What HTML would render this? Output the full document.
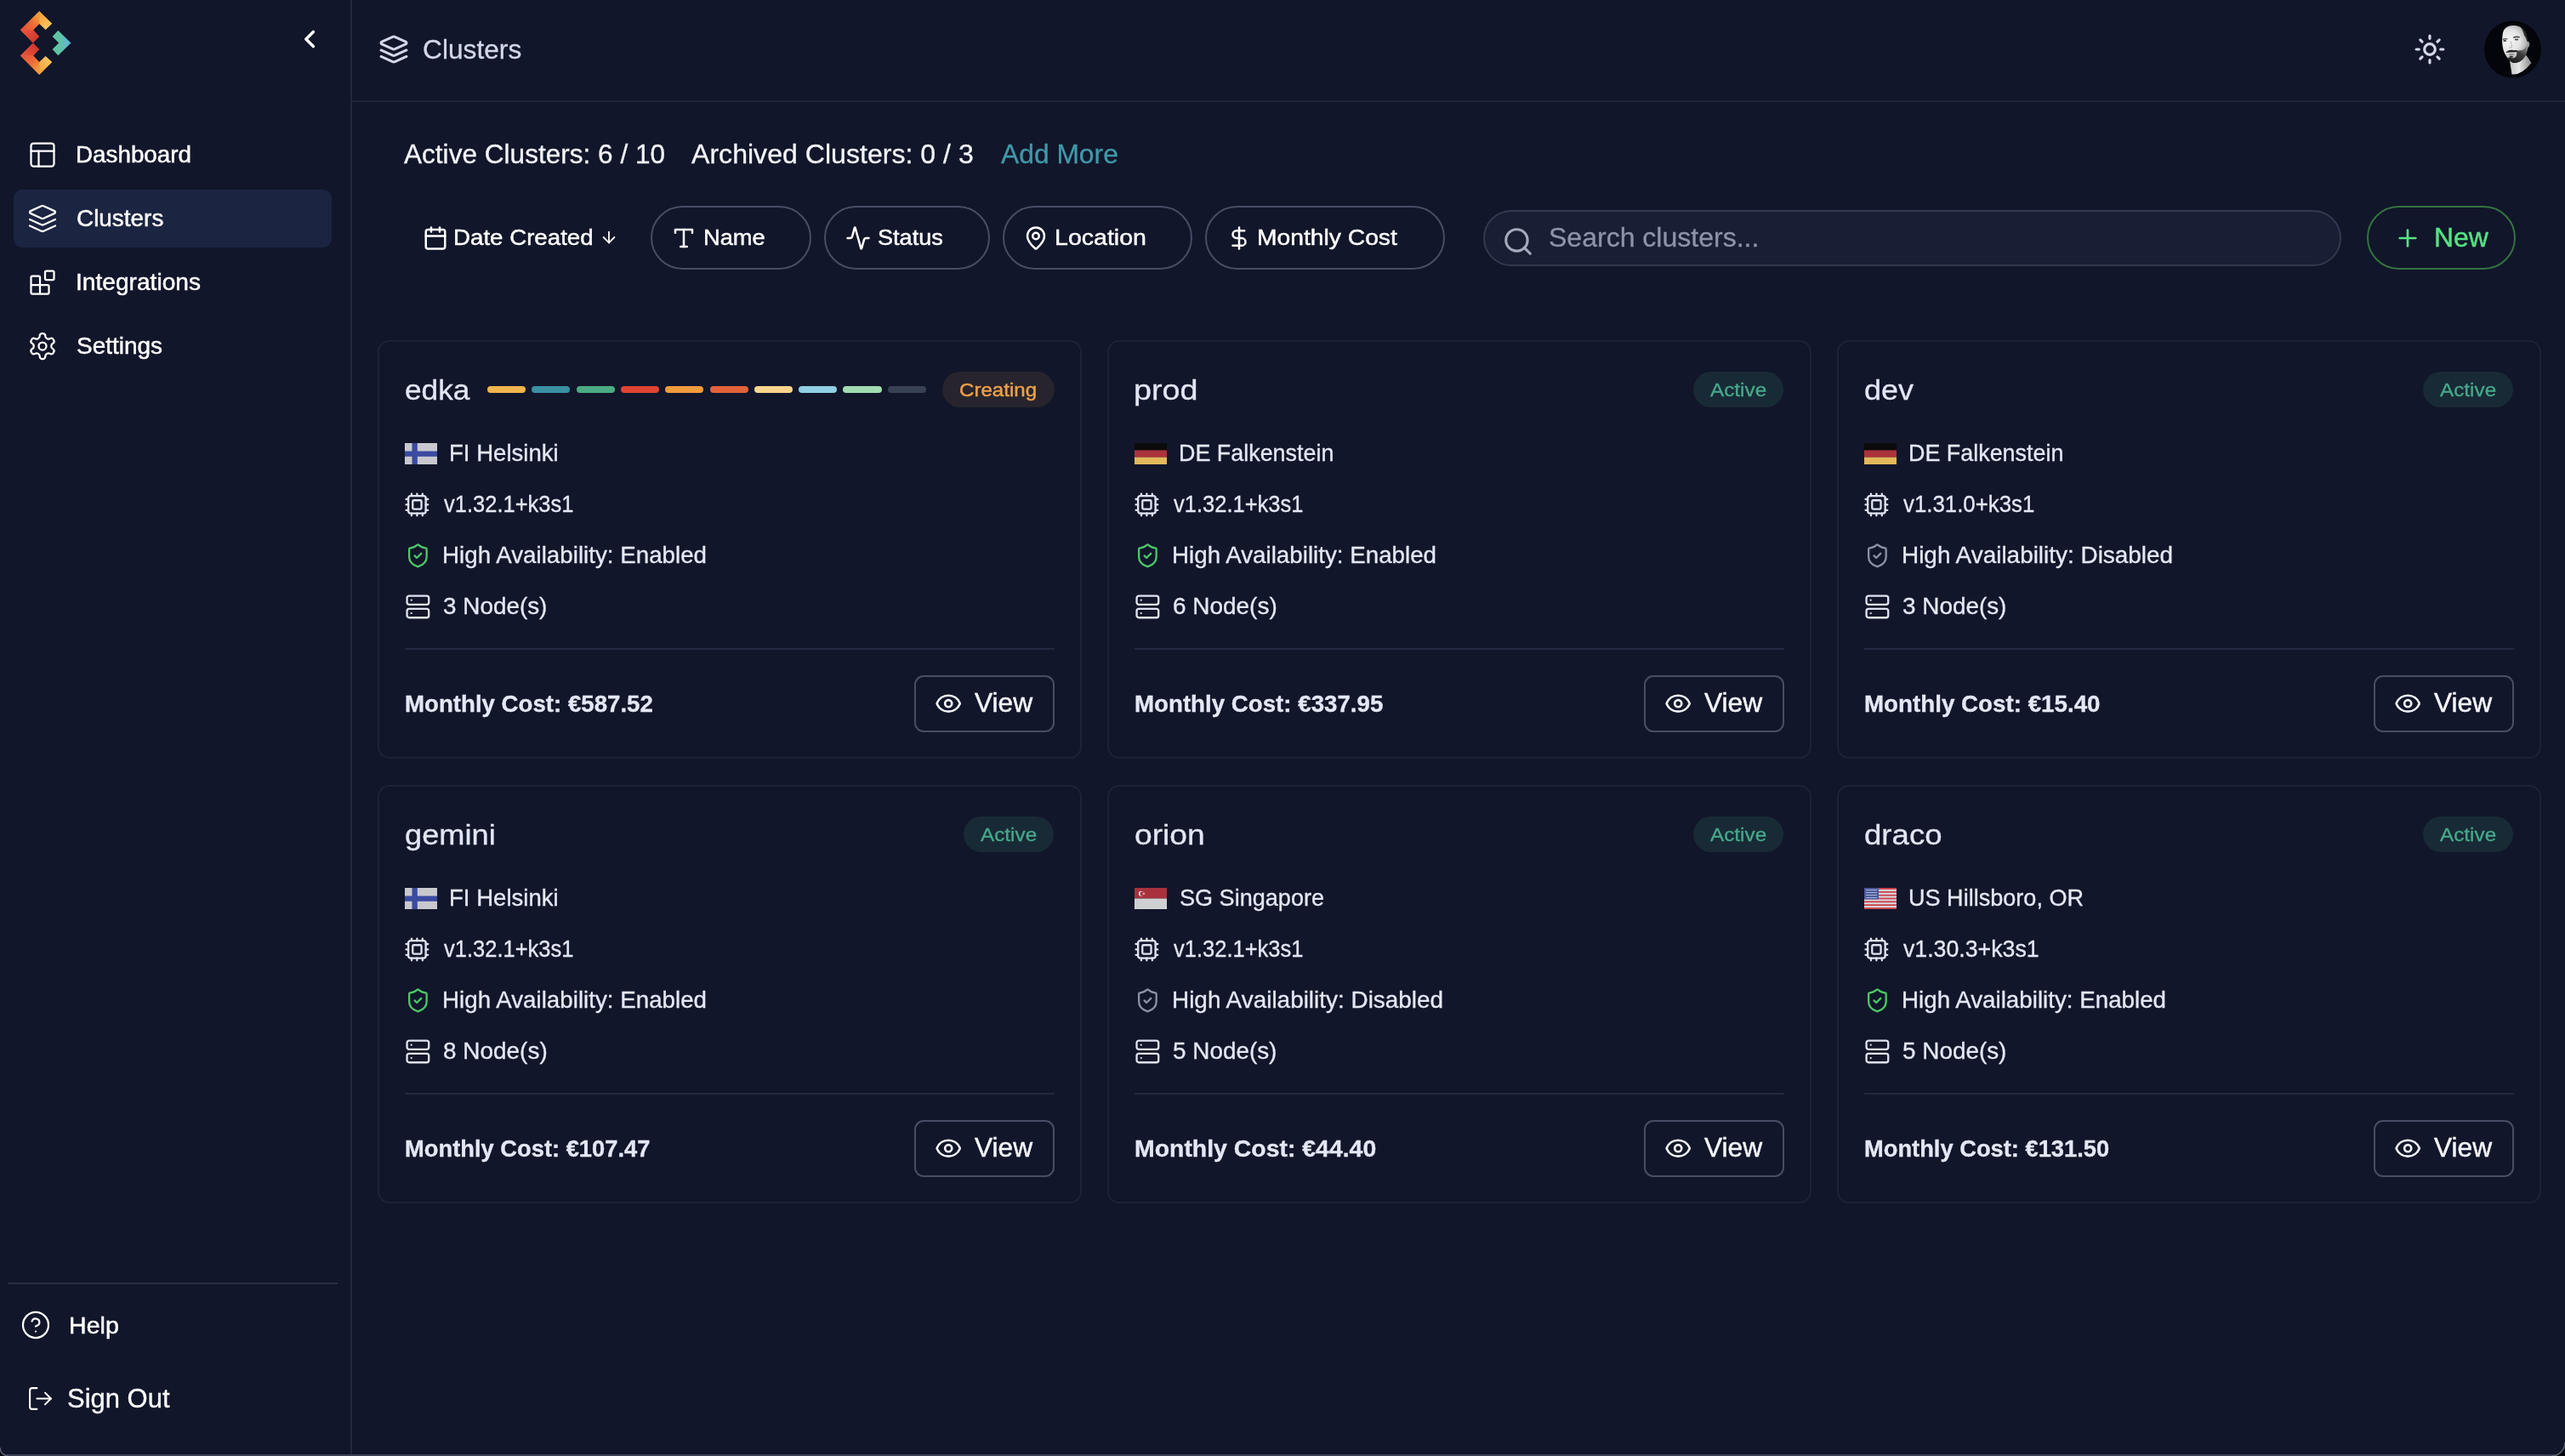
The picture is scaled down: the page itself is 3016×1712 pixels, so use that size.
<!DOCTYPE html>
<html lang="en">
<head>
<meta charset="utf-8">
<title>Clusters</title>
<style>
*{box-sizing:border-box;margin:0;padding:0}
html,body{width:3016px;height:1712px;overflow:hidden;background:#11162a}
body{position:relative;font-family:"Liberation Sans",sans-serif;color:#f3f5fb}
svg{display:block;overflow:visible}
.ic{fill:none;stroke:currentColor;stroke-linecap:round;stroke-linejoin:round}
.abs{position:absolute}
.t{position:absolute;white-space:nowrap;line-height:1;transform-origin:0 50%;-webkit-text-stroke:.3px currentColor}
.m{-webkit-text-stroke:.45px currentColor}
.b{font-weight:bold;-webkit-text-stroke:.3px currentColor}
#root{position:absolute;left:0;top:0;width:3016px;height:1712px;will-change:transform}
#side{position:absolute;left:0;top:0;width:414px;height:1712px;border-right:2px solid #22283d}
#navon{position:absolute;left:16px;top:223px;width:374px;height:68px;border-radius:10px;background:#1b2441}
#sdiv{position:absolute;left:9px;top:1508px;width:388px;height:2px;background:#272d43}
#head{position:absolute;left:414px;top:0;width:2602px;height:120px;border-bottom:2px solid #1f2539}
.pill{position:absolute;top:242px;height:75px;border:2px solid #474d65;border-radius:38px}
#search{position:absolute;left:1744px;top:247px;width:1009px;height:66px;border:2px solid #323950;border-radius:33px;background:#181e33}
#new{position:absolute;left:2783px;top:242px;width:175px;height:75px;border:2px solid #34733f;border-radius:38px}
.card{position:absolute;width:828px;height:492px;border:2px solid #1c2237;border-radius:14px}
.card>*{position:absolute}
.badge{height:42px;border-radius:21px}
.badge.a{background:#182a36;color:#47a98b}
.badge.c{background:#27242d;color:#f0a04a}
.cdiv{left:30px;width:764px;top:360px;height:2px;background:#222940}
.view{left:629px;top:392px;width:165px;height:67px;border:2px solid #474e65;border-radius:11px}
</style>
</head>
<body>
<div id="root">
<div id="side">
<svg class="abs" style="left:0;top:0" width="110" height="110" viewBox="0 0 110 110">
<defs>
<linearGradient id="ga" gradientUnits="userSpaceOnUse" x1="46" y1="20" x2="58" y2="32"><stop offset="0" stop-color="#f4a53e"/><stop offset=".5" stop-color="#f7b650"/><stop offset="1" stop-color="#fac964"/></linearGradient>
<linearGradient id="gb" gradientUnits="userSpaceOnUse" x1="30" y1="36" x2="46" y2="20"><stop offset="0" stop-color="#e7543a"/><stop offset=".5" stop-color="#ec6c37"/><stop offset="1" stop-color="#f29a3a"/></linearGradient>
<linearGradient id="gc" gradientUnits="userSpaceOnUse" x1="30" y1="35" x2="43" y2="47"><stop offset="0" stop-color="#e6523a"/><stop offset=".5" stop-color="#dc4536"/><stop offset="1" stop-color="#cd3830"/></linearGradient>
<linearGradient id="gd" gradientUnits="userSpaceOnUse" x1="63" y1="50" x2="84" y2="50"><stop offset="0" stop-color="#5cc4a0"/><stop offset=".4" stop-color="#5fc3a8"/><stop offset=".7" stop-color="#62b9c9"/><stop offset="1" stop-color="#5eabd8"/></linearGradient>
</defs>
<g>
<path fill="#ea6a37" d="M46.2 13.400 60.800 27.800 53.600 34.600 46.200 27.600 38.800 35.300 45.800 43 38.800 50 24.200 35.300Z"/>
<path fill="url(#gc)" d="M23.8 35.3H39.2L46.2 43 38.8 50.5Z"/>
<path fill="url(#gb)" d="M46.2 13V28L39.2 35.3H23.8Z"/>
<path fill="url(#ga)" d="M46.2 13 61.2 27.8 53.6 35 46.2 28Z"/>
</g>
<g transform="matrix(1 0 0 -1 0 100.900)">
<path fill="#ea6a37" d="M46.2 13.400 60.800 27.800 53.600 34.600 46.200 27.600 38.800 35.300 45.800 43 38.800 50 24.200 35.300Z"/>
<path fill="url(#gc)" d="M23.8 35.3H39.2L46.2 43 38.8 50.5Z"/>
<path fill="url(#gb)" d="M46.2 13V28L39.2 35.3H23.8Z"/>
<path fill="url(#ga)" d="M46.2 13 61.2 27.8 53.6 35 46.2 28Z"/>
</g>
<path fill="url(#gd)" d="M68.3 35.7 83.5 50.4 68.3 65.2 61.6 58 69.2 50.4 61.6 42.9Z"/>
</svg>
<svg class="abs ic" style="left:340px;top:26px;stroke-width:3.5;color:#fff" width="40" height="40" viewBox="340 26 40 40"><polyline points="368.4,37.4 359.8,46 368.4,54.6"/></svg>
<div id="navon"></div>
<svg class="abs ic" style="left:32.0px;top:164.0px;stroke-width:1.5;color:#fff;" width="36" height="36" viewBox="0 0 24 24"><rect width="18" height="18" x="3" y="3" rx="2"/><path d="M3 9h18"/><path d="M9 21V9"/></svg>
<div class="t m" style="left:89.4px;top:167.8px;font-size:27.2px;transform:scaleX(1.0225);color:#fff;">Dashboard</div>
<svg class="abs ic" style="left:32.0px;top:239.0px;stroke-width:1.5;color:#fff;" width="36" height="36" viewBox="0 0 24 24"><path d="m12.83 2.18a2 2 0 0 0-1.66 0L2.6 6.08a1 1 0 0 0 0 1.83l8.58 3.91a2 2 0 0 0 1.66 0l8.58-3.9a1 1 0 0 0 0-1.83Z"/><path d="m22 17.65-9.17 4.16a2 2 0 0 1-1.66 0L2 17.65"/><path d="m22 12.65-9.17 4.16a2 2 0 0 1-1.66 0L2 12.65"/></svg>
<div class="t m" style="left:89.7px;top:242.9px;font-size:27.2px;transform:scaleX(1.0263);color:#fff;">Clusters</div>
<svg class="abs ic" style="left:32.0px;top:314.0px;stroke-width:1.5;color:#fff;" width="36" height="36" viewBox="0 0 24 24"><rect width="7" height="7" x="14" y="3" rx="1"/><path d="M10 21V8a1 1 0 0 0-1-1H4a1 1 0 0 0-1 1v12a1 1 0 0 0 1 1h12a1 1 0 0 0 1-1v-5a1 1 0 0 0-1-1H3"/></svg>
<div class="t m" style="left:89.3px;top:317.9px;font-size:27.2px;transform:scaleX(1.0346);color:#fff;">Integrations</div>
<svg class="abs ic" style="left:32.0px;top:389.0px;stroke-width:1.5;color:#fff;" width="36" height="36" viewBox="0 0 24 24"><path d="M12.22 2h-.44a2 2 0 0 0-2 2v.18a2 2 0 0 1-1 1.73l-.43.25a2 2 0 0 1-2 0l-.15-.08a2 2 0 0 0-2.73.73l-.22.38a2 2 0 0 0 .73 2.73l.15.1a2 2 0 0 1 1 1.72v.51a2 2 0 0 1-1 1.74l-.15.09a2 2 0 0 0-.73 2.73l.22.38a2 2 0 0 0 2.73.73l.15-.08a2 2 0 0 1 2 0l.43.25a2 2 0 0 1 1 1.73V20a2 2 0 0 0 2 2h.44a2 2 0 0 0 2-2v-.18a2 2 0 0 1 1-1.73l.43-.25a2 2 0 0 1 2 0l.15.08a2 2 0 0 0 2.73-.73l.22-.39a2 2 0 0 0-.73-2.73l-.15-.08a2 2 0 0 1-1-1.74v-.5a2 2 0 0 1 1-1.74l.15-.09a2 2 0 0 0 .73-2.73l-.22-.38a2 2 0 0 0-2.73-.73l-.15.08a2 2 0 0 1-2 0l-.43-.25a2 2 0 0 1-1-1.73V4a2 2 0 0 0-2-2z"/><circle cx="12" cy="12" r="3"/></svg>
<div class="t m" style="left:90.0px;top:393.0px;font-size:27.2px;transform:scaleX(1.0275);color:#fff;">Settings</div>
<div id="sdiv"></div>
<svg class="abs ic" style="left:23.9px;top:1540.0px;stroke-width:1.5;color:#fff;" width="36" height="36" viewBox="0 0 24 24"><circle cx="12" cy="12" r="10"/><path d="M9.09 9a3 3 0 0 1 5.83 1c0 2-3 3-3 3"/><path d="M12 17h.01"/></svg>
<div class="t m" style="left:81.4px;top:1544.8px;font-size:27.2px;transform:scaleX(1.0512);color:#fff;">Help</div>
<svg class="abs ic" style="left:31.3px;top:1628.4px;stroke-width:1.5;color:#fff;" width="33" height="33" viewBox="0 0 24 24"><path d="M9 21H5a2 2 0 0 1-2-2V5a2 2 0 0 1 2-2h4"/><polyline points="16 17 21 12 16 7"/><line x1="21" x2="9" y1="12" y2="12"/></svg>
<div class="t" style="left:78.9px;top:1628.8px;font-size:31.7px;transform:scaleX(0.9772);color:#fff;">Sign Out</div>
</div>
<div id="head"></div>
<svg class="abs ic" style="left:444.9px;top:39.9px;stroke-width:2;color:#d3d7e9;" width="36" height="36" viewBox="0 0 24 24"><path d="m12.83 2.18a2 2 0 0 0-1.66 0L2.6 6.08a1 1 0 0 0 0 1.83l8.58 3.91a2 2 0 0 0 1.66 0l8.58-3.9a1 1 0 0 0 0-1.83Z"/><path d="m22 17.65-9.17 4.16a2 2 0 0 1-1.66 0L2 17.65"/><path d="m22 12.65-9.17 4.16a2 2 0 0 1-1.66 0L2 12.65"/></svg>
<div class="t" style="left:496.8px;top:42.5px;font-size:31.7px;transform:scaleX(1.0003);color:#d3d7e9;">Clusters</div>
<svg class="abs ic" style="left:2837.7px;top:38.7px;stroke-width:2;color:#d3d7e9;" width="38" height="38" viewBox="0 0 24 24"><circle cx="12" cy="12" r="4"/><path d="M12 2v2"/><path d="M12 20v2"/><path d="m4.93 4.93 1.41 1.41"/><path d="m17.66 17.66 1.41 1.41"/><path d="M2 12h2"/><path d="M20 12h2"/><path d="m6.34 17.66-1.41 1.41"/><path d="m19.07 4.93-1.41 1.41"/></svg>
<svg class="abs" style="left:2920px;top:24px" width="68" height="68" viewBox="0 0 68 68">
<defs><clipPath id="av"><circle cx="34.500" cy="34" r="33.500"/></clipPath>
<radialGradient id="fg" gradientUnits="userSpaceOnUse" cx="30" cy="24" r="26"><stop offset="0" stop-color="#f6f6f6"/><stop offset=".5" stop-color="#e4e4e4"/><stop offset=".8" stop-color="#b4b4b4"/><stop offset="1" stop-color="#7c7c7c"/></radialGradient>
<linearGradient id="ng" gradientUnits="userSpaceOnUse" x1="32" y1="52" x2="56" y2="50"><stop offset="0" stop-color="#c9c9c9"/><stop offset=".4" stop-color="#e6e6e6"/><stop offset="1" stop-color="#8d8d8d"/></linearGradient>
<linearGradient id="bg2" gradientUnits="userSpaceOnUse" x1="36" y1="50" x2="48" y2="30"><stop offset="0" stop-color="#1d1d1d"/><stop offset=".55" stop-color="#3a3a3a"/><stop offset="1" stop-color="#8a8a8a"/></linearGradient>
<filter id="bl" x="-20%" y="-20%" width="140%" height="140%"><feGaussianBlur stdDeviation=".55"/></filter>
</defs>
<g clip-path="url(#av)"><rect width="68" height="68" fill="#04050a"/>
<g filter="url(#bl)">
<path d="M31 47 L33.500 63.500 Q45 64.500 56.500 50 L50.500 41Z" fill="url(#ng)"/>
<path d="M35.900 6C28 5.500 23 10 22.600 17C22 22 22 26 22.600 30C23.200 35 25 40 28.700 44.400C31 47.500 33 49.500 36 50C40 50 45 47.500 48 44C50.500 40 51.500 36 52.500 32C54.500 31 55 27 53.500 25.500C53 24 52 24.500 51.500 25C51.500 20 51 16 49 13C46 8 41 6 35.900 6Z" fill="url(#fg)"/>
<path d="M43 7C49 9.500 52 15 51.700 25.500C50.500 22 49.500 19.500 48 17.500C47 13 45.500 10 43 7Z" fill="#161616" opacity=".85"/>
<path d="M39 35.500C43 35.500 46 35.500 48 33.500C49.500 32 50.500 30.500 51.300 29C52 35 50.500 41 47.500 44.500C44 48.700 40 50.300 36 50C33 49.500 30.500 47 28.700 44.400C29.500 43.500 30.500 43.200 31.500 43.500C33.500 45 36.500 44.500 38.500 42.500C39.500 40.500 39.500 38 39 35.500Z" fill="url(#bg2)"/>
<path d="M26.300 38C28.500 35 32.500 34.300 35.500 35.300C37.500 34.800 39.500 35 40.800 36.200C38.500 37.300 36 37.300 34 37.600C31 37.600 28.500 38 26.300 38Z" fill="#242424"/>
<ellipse cx="33" cy="40" rx="3.300" ry="1.100" fill="#8e8e8e"/>
<ellipse cx="32.800" cy="42.800" rx="2.200" ry="1.100" fill="#2c2c2c"/>
<path d="M22.800 21.800Q25.500 20.200 28.600 21.600L28.400 22.600Q25.500 21.600 22.900 23Z" fill="#3c3c3c"/>
<path d="M35 19.600Q39 17.600 43 19.300L42.700 20.500Q39 19.200 35.300 20.900Z" fill="#3c3c3c"/>
<ellipse cx="25.200" cy="24" rx="1.900" ry=".9" fill="#3a3a3a"/>
<ellipse cx="39" cy="22.400" rx="2.300" ry="1" fill="#484848"/>
<path d="M31.800 24Q33.600 28 33.600 31.500Q32 32.600 30 31.800" fill="none" stroke="#b5b5b5" stroke-width="1"/>
</g>
</g></svg>
<div class="t" style="left:474.6px;top:166.2px;font-size:31.7px;transform:scaleX(0.9965);color:#f3f5fb;">Active Clusters: 6 / 10</div>
<div class="t" style="left:813.3px;top:166.2px;font-size:31.7px;transform:scaleX(1.0127);color:#f3f5fb;">Archived Clusters: 0 / 3</div>
<div class="t" style="left:1177.0px;top:166.2px;font-size:31.7px;transform:scaleX(1.0032);color:#4298a9;">Add More</div>
<svg class="abs ic" style="left:497.1px;top:264.9px;stroke-width:2;color:#fff;" width="30" height="30" viewBox="0 0 24 24"><path d="M8 2v4"/><path d="M16 2v4"/><rect width="18" height="18" x="3" y="4" rx="2"/><path d="M3 10h18"/></svg>
<div class="t m" style="left:533.4px;top:266.4px;font-size:26.1px;transform:scaleX(1.0607);color:#fff;">Date Created</div>
<svg class="abs ic" style="left:705.2px;top:268.4px;stroke-width:2;color:#fff;" width="22" height="22" viewBox="0 0 24 24"><path d="M12 5v14"/><path d="m19 12-7 7-7-7"/></svg>
<div class="pill" style="left:765px;width:189px"></div>
<svg class="abs ic" style="left:789.1px;top:265.2px;stroke-width:2;color:#fff;" width="30" height="30" viewBox="0 0 24 24"><polyline points="4 7 4 4 20 4 20 7"/><line x1="9" x2="15" y1="20" y2="20"/><line x1="12" x2="12" y1="4" y2="20"/></svg>
<div class="t m" style="left:826.6px;top:266.4px;font-size:26.1px;transform:scaleX(1.0448);color:#fff;">Name</div>
<div class="pill" style="left:969px;width:195px"></div>
<svg class="abs ic" style="left:994.0px;top:264.9px;stroke-width:2;color:#fff;" width="30" height="30" viewBox="0 0 24 24"><path d="M22 12h-2.480a2 2 0 0 0-1.930 1.460l-2.350 8.360a.25.25 0 0 1-.48 0L9.240 2.180a.25.25 0 0 0-.48 0l-2.350 8.360A2 2 0 0 1 4.490 12H2"/></svg>
<div class="t m" style="left:1031.5px;top:266.4px;font-size:26.1px;transform:scaleX(1.038);color:#fff;">Status</div>
<div class="pill" style="left:1179px;width:223px"></div>
<svg class="abs ic" style="left:1202.9px;top:265.0px;stroke-width:2;color:#fff;" width="30" height="30" viewBox="0 0 24 24"><path d="M20 10c0 4.993-5.539 10.193-7.399 11.799a1 1 0 0 1-1.202 0C9.539 20.193 4 14.993 4 10a8 8 0 0 1 16 0"/><circle cx="12" cy="10" r="3"/></svg>
<div class="t m" style="left:1240.1px;top:266.4px;font-size:26.1px;transform:scaleX(1.0942);color:#fff;">Location</div>
<div class="pill" style="left:1417px;width:282px"></div>
<svg class="abs ic" style="left:1442.0px;top:264.7px;stroke-width:2;color:#fff;" width="30" height="30" viewBox="0 0 24 24"><line x1="12" x2="12" y1="2" y2="22"/><path d="M17 5H9.500a3.500 3.500 0 0 0 0 7h5a3.500 3.500 0 0 1 0 7H6"/></svg>
<div class="t m" style="left:1478.4px;top:266.4px;font-size:26.1px;transform:scaleX(1.0826);color:#fff;">Monthly Cost</div>
<div id="search"></div>
<svg class="abs ic" style="left:1765.6px;top:265.0px;stroke-width:2;color:#a4a9be;" width="38" height="38" viewBox="0 0 24 24"><circle cx="11" cy="11" r="8"/><path d="m21 21-4.300-4.300"/></svg>
<div class="t" style="left:1820.9px;top:264.3px;font-size:31.7px;transform:scaleX(1.0104);color:#8d93aa;">Search clusters...</div>
<div id="new"></div>
<svg class="abs ic" style="left:2814.9px;top:264.0px;stroke-width:2;color:#56e283;" width="32" height="32" viewBox="0 0 24 24"><path d="M5 12h14"/><path d="M12 5v14"/></svg>
<div class="t m" style="left:2861.6px;top:264.3px;font-size:31.7px;transform:scaleX(1.0064);color:#56e283;">New</div>
<div class="card" style="left:444px;top:400px">
<div class="t" style="left:29.8px;top:39.3px;font-size:34.0px;transform:scaleX(1.0368);color:#e2e6f5;">edka</div>
<i style="left:127.0px;top:52px;width:45.2px;height:8.4px;border-radius:4.2px;background:#f0b54e"></i><i style="left:179.3px;top:52px;width:45.2px;height:8.4px;border-radius:4.2px;background:#3a8fa3"></i><i style="left:231.6px;top:52px;width:45.2px;height:8.4px;border-radius:4.2px;background:#4bab82"></i><i style="left:283.9px;top:52px;width:45.2px;height:8.4px;border-radius:4.2px;background:#e14434"></i><i style="left:336.2px;top:52px;width:45.2px;height:8.4px;border-radius:4.2px;background:#f09b3b"></i><i style="left:388.5px;top:52px;width:45.2px;height:8.4px;border-radius:4.2px;background:#e2623b"></i><i style="left:440.8px;top:52px;width:45.2px;height:8.4px;border-radius:4.2px;background:#fbd48e"></i><i style="left:493.1px;top:52px;width:45.2px;height:8.4px;border-radius:4.2px;background:#8fd0e2"></i><i style="left:545.4px;top:52px;width:45.2px;height:8.4px;border-radius:4.2px;background:#a2dcb1"></i><i style="left:597.7px;top:52px;width:45.2px;height:8.4px;border-radius:4.2px;background:#394156"></i>
<div class="badge c" style="left:662.2px;top:35px;width:132.2px"></div><div class="t m" style="left:682.1px;top:45.4px;font-size:22.7px;transform:scaleX(1.0614);color:#f0a04a;">Creating</div>
<svg style="left:30px;top:118.500px" width="38" height="25" viewBox="0 0 38 25"><rect width="38" height="25" fill="#c8c9ce"/><rect x="8.500" width="6.300" height="25" fill="#3a4a9f"/><rect y="9.500" width="38" height="6.300" fill="#3a4a9f"/></svg><div class="t" style="left:81.7px;top:116.8px;font-size:27.2px;transform:scaleX(1.0141);color:#e4e8f6;">FI Helsinki</div>
<svg class="ic" style="left:29.4px;top:175.7px;stroke-width:1.8;color:#dfe3f2" width="30.8" height="30.8" viewBox="0 0 24 24"><path d="M12 20v2"/><path d="M12 2v2"/><path d="M17 20v2"/><path d="M17 2v2"/><path d="M2 12h2"/><path d="M2 17h2"/><path d="M2 7h2"/><path d="M20 12h2"/><path d="M20 17h2"/><path d="M20 7h2"/><path d="M7 20v2"/><path d="M7 2v2"/><rect x="4" y="4" width="16" height="16" rx="2"/><rect x="8" y="8" width="8" height="8" rx="1"/></svg><div class="t" style="left:75.9px;top:176.9px;font-size:27.2px;transform:scaleX(0.9382);color:#e4e8f6;">v1.32.1+k3s1</div>
<svg class="ic" style="left:29.6px;top:235.6px;stroke-width:1.8;color:#4cc766" width="30.8" height="30.8" viewBox="0 0 24 24"><path d="M20 13c0 5-3.500 7.500-7.660 8.950a1 1 0 0 1-.67-.010C7.500 20.500 4 18 4 13V6a1 1 0 0 1 1-1c2 0 4.500-1.200 6.240-2.720a1.170 1.170 0 0 1 1.520 0C14.510 3.810 17 5 19 5a1 1 0 0 1 1 1z"/><path d="m9 12 2 2 4-4"/></svg><div class="t" style="left:74.4px;top:237.2px;font-size:27.2px;transform:scaleX(1.0205);color:#e4e8f6;">High Availability: Enabled</div>
<svg class="ic" style="left:29.6px;top:295.7px;stroke-width:1.8;color:#dfe3f2" width="30.8" height="30.8" viewBox="0 0 24 24"><rect width="20" height="8" x="2" y="2" rx="2" ry="2"/><rect width="20" height="8" x="2" y="14" rx="2" ry="2"/><line x1="6" x2="6.010" y1="6" y2="6"/><line x1="6" x2="6.010" y1="18" y2="18"/></svg><div class="t" style="left:75.4px;top:296.7px;font-size:27.2px;transform:scaleX(1.0254);color:#e4e8f6;">3 Node(s)</div>
<div class="cdiv"></div>
<div class="t b" style="left:29.8px;top:411.9px;font-size:27.2px;transform:scaleX(1.0167);color:#e4e8f6;">Monthly Cost: €587.52</div>
<div class="view"></div><svg class="ic" style="left:652.7px;top:408.7px;stroke-width:2;color:#f3f5fb" width="32.4" height="32.4" viewBox="0 0 24 24"><path d="M2.062 12.348a1 1 0 0 1 0-.696 10.750 10.750 0 0 1 19.876 0 1 1 0 0 1 0 .696 10.750 10.750 0 0 1-19.876 0"/><circle cx="12" cy="12" r="3"/></svg><div class="t m" style="left:700.4px;top:409.1px;font-size:31.7px;transform:scaleX(0.9996);color:#f3f5fb;">View</div>
</div>
<div class="card" style="left:1302px;top:400px">
<div class="t" style="left:28.6px;top:39.3px;font-size:34.0px;transform:scaleX(1.1101);color:#e2e6f5;">prod</div>
<div class="badge a" style="left:686.5px;top:35px;width:106.4px"></div><div class="t" style="left:707.3px;top:45.2px;font-size:22.7px;transform:scaleX(1.0709);color:#47a98b;">Active</div>
<svg style="left:30px;top:118.500px" width="38" height="25" viewBox="0 0 38 25"><rect width="38" height="8.500" fill="#0b0b0b"/><rect y="8.400" width="38" height="8.400" fill="#ab333b"/><rect y="16.700" width="38" height="8.300" fill="#e3b95a"/></svg><div class="t" style="left:81.7px;top:116.8px;font-size:27.2px;transform:scaleX(0.9893);color:#e4e8f6;">DE Falkenstein</div>
<svg class="ic" style="left:29.4px;top:175.7px;stroke-width:1.8;color:#dfe3f2" width="30.8" height="30.8" viewBox="0 0 24 24"><path d="M12 20v2"/><path d="M12 2v2"/><path d="M17 20v2"/><path d="M17 2v2"/><path d="M2 12h2"/><path d="M2 17h2"/><path d="M2 7h2"/><path d="M20 12h2"/><path d="M20 17h2"/><path d="M20 7h2"/><path d="M7 20v2"/><path d="M7 2v2"/><rect x="4" y="4" width="16" height="16" rx="2"/><rect x="8" y="8" width="8" height="8" rx="1"/></svg><div class="t" style="left:75.9px;top:176.9px;font-size:27.2px;transform:scaleX(0.9382);color:#e4e8f6;">v1.32.1+k3s1</div>
<svg class="ic" style="left:29.6px;top:235.6px;stroke-width:1.8;color:#4cc766" width="30.8" height="30.8" viewBox="0 0 24 24"><path d="M20 13c0 5-3.500 7.500-7.660 8.950a1 1 0 0 1-.67-.010C7.500 20.500 4 18 4 13V6a1 1 0 0 1 1-1c2 0 4.500-1.200 6.240-2.720a1.170 1.170 0 0 1 1.520 0C14.510 3.810 17 5 19 5a1 1 0 0 1 1 1z"/><path d="m9 12 2 2 4-4"/></svg><div class="t" style="left:74.4px;top:237.2px;font-size:27.2px;transform:scaleX(1.0205);color:#e4e8f6;">High Availability: Enabled</div>
<svg class="ic" style="left:29.6px;top:295.7px;stroke-width:1.8;color:#dfe3f2" width="30.8" height="30.8" viewBox="0 0 24 24"><rect width="20" height="8" x="2" y="2" rx="2" ry="2"/><rect width="20" height="8" x="2" y="14" rx="2" ry="2"/><line x1="6" x2="6.010" y1="6" y2="6"/><line x1="6" x2="6.010" y1="18" y2="18"/></svg><div class="t" style="left:75.4px;top:296.7px;font-size:27.2px;transform:scaleX(1.028);color:#e4e8f6;">6 Node(s)</div>
<div class="cdiv"></div>
<div class="t b" style="left:29.8px;top:411.9px;font-size:27.2px;transform:scaleX(1.0184);color:#e4e8f6;">Monthly Cost: €337.95</div>
<div class="view"></div><svg class="ic" style="left:652.7px;top:408.7px;stroke-width:2;color:#f3f5fb" width="32.4" height="32.4" viewBox="0 0 24 24"><path d="M2.062 12.348a1 1 0 0 1 0-.696 10.750 10.750 0 0 1 19.876 0 1 1 0 0 1 0 .696 10.750 10.750 0 0 1-19.876 0"/><circle cx="12" cy="12" r="3"/></svg><div class="t m" style="left:700.4px;top:409.1px;font-size:31.7px;transform:scaleX(0.9996);color:#f3f5fb;">View</div>
</div>
<div class="card" style="left:2160px;top:400px">
<div class="t" style="left:29.7px;top:39.3px;font-size:34.0px;transform:scaleX(1.0573);color:#e2e6f5;">dev</div>
<div class="badge a" style="left:686.5px;top:35px;width:106.4px"></div><div class="t" style="left:707.3px;top:45.2px;font-size:22.7px;transform:scaleX(1.0709);color:#47a98b;">Active</div>
<svg style="left:30px;top:118.500px" width="38" height="25" viewBox="0 0 38 25"><rect width="38" height="8.500" fill="#0b0b0b"/><rect y="8.400" width="38" height="8.400" fill="#ab333b"/><rect y="16.700" width="38" height="8.300" fill="#e3b95a"/></svg><div class="t" style="left:81.7px;top:116.8px;font-size:27.2px;transform:scaleX(0.9893);color:#e4e8f6;">DE Falkenstein</div>
<svg class="ic" style="left:29.4px;top:175.7px;stroke-width:1.8;color:#dfe3f2" width="30.8" height="30.8" viewBox="0 0 24 24"><path d="M12 20v2"/><path d="M12 2v2"/><path d="M17 20v2"/><path d="M17 2v2"/><path d="M2 12h2"/><path d="M2 17h2"/><path d="M2 7h2"/><path d="M20 12h2"/><path d="M20 17h2"/><path d="M20 7h2"/><path d="M7 20v2"/><path d="M7 2v2"/><rect x="4" y="4" width="16" height="16" rx="2"/><rect x="8" y="8" width="8" height="8" rx="1"/></svg><div class="t" style="left:75.9px;top:176.9px;font-size:27.2px;transform:scaleX(0.9494);color:#e4e8f6;">v1.31.0+k3s1</div>
<svg class="ic" style="left:29.6px;top:235.6px;stroke-width:1.8;color:#8c91a6" width="30.8" height="30.8" viewBox="0 0 24 24"><path d="M20 13c0 5-3.500 7.500-7.660 8.950a1 1 0 0 1-.67-.010C7.500 20.500 4 18 4 13V6a1 1 0 0 1 1-1c2 0 4.500-1.200 6.240-2.720a1.170 1.170 0 0 1 1.520 0C14.510 3.810 17 5 19 5a1 1 0 0 1 1 1z"/><path d="m9 12 2 2 4-4"/></svg><div class="t" style="left:74.3px;top:237.2px;font-size:27.2px;transform:scaleX(1.0266);color:#e4e8f6;">High Availability: Disabled</div>
<svg class="ic" style="left:29.6px;top:295.7px;stroke-width:1.8;color:#dfe3f2" width="30.8" height="30.8" viewBox="0 0 24 24"><rect width="20" height="8" x="2" y="2" rx="2" ry="2"/><rect width="20" height="8" x="2" y="14" rx="2" ry="2"/><line x1="6" x2="6.010" y1="6" y2="6"/><line x1="6" x2="6.010" y1="18" y2="18"/></svg><div class="t" style="left:75.4px;top:296.7px;font-size:27.2px;transform:scaleX(1.0254);color:#e4e8f6;">3 Node(s)</div>
<div class="cdiv"></div>
<div class="t b" style="left:29.8px;top:411.9px;font-size:27.2px;transform:scaleX(1.0207);color:#e4e8f6;">Monthly Cost: €15.40</div>
<div class="view"></div><svg class="ic" style="left:652.7px;top:408.7px;stroke-width:2;color:#f3f5fb" width="32.4" height="32.4" viewBox="0 0 24 24"><path d="M2.062 12.348a1 1 0 0 1 0-.696 10.750 10.750 0 0 1 19.876 0 1 1 0 0 1 0 .696 10.750 10.750 0 0 1-19.876 0"/><circle cx="12" cy="12" r="3"/></svg><div class="t m" style="left:700.4px;top:409.1px;font-size:31.7px;transform:scaleX(0.9996);color:#f3f5fb;">View</div>
</div>
<div class="card" style="left:444px;top:923px">
<div class="t" style="left:29.7px;top:39.3px;font-size:34.0px;transform:scaleX(1.0655);color:#e2e6f5;">gemini</div>
<div class="badge a" style="left:686.5px;top:35px;width:106.4px"></div><div class="t" style="left:707.3px;top:45.2px;font-size:22.7px;transform:scaleX(1.0709);color:#47a98b;">Active</div>
<svg style="left:30px;top:118.500px" width="38" height="25" viewBox="0 0 38 25"><rect width="38" height="25" fill="#c8c9ce"/><rect x="8.500" width="6.300" height="25" fill="#3a4a9f"/><rect y="9.500" width="38" height="6.300" fill="#3a4a9f"/></svg><div class="t" style="left:81.7px;top:116.8px;font-size:27.2px;transform:scaleX(1.0141);color:#e4e8f6;">FI Helsinki</div>
<svg class="ic" style="left:29.4px;top:175.7px;stroke-width:1.8;color:#dfe3f2" width="30.8" height="30.8" viewBox="0 0 24 24"><path d="M12 20v2"/><path d="M12 2v2"/><path d="M17 20v2"/><path d="M17 2v2"/><path d="M2 12h2"/><path d="M2 17h2"/><path d="M2 7h2"/><path d="M20 12h2"/><path d="M20 17h2"/><path d="M20 7h2"/><path d="M7 20v2"/><path d="M7 2v2"/><rect x="4" y="4" width="16" height="16" rx="2"/><rect x="8" y="8" width="8" height="8" rx="1"/></svg><div class="t" style="left:75.9px;top:176.9px;font-size:27.2px;transform:scaleX(0.9382);color:#e4e8f6;">v1.32.1+k3s1</div>
<svg class="ic" style="left:29.6px;top:235.6px;stroke-width:1.8;color:#4cc766" width="30.8" height="30.8" viewBox="0 0 24 24"><path d="M20 13c0 5-3.500 7.500-7.660 8.950a1 1 0 0 1-.67-.010C7.500 20.500 4 18 4 13V6a1 1 0 0 1 1-1c2 0 4.500-1.200 6.240-2.720a1.170 1.170 0 0 1 1.520 0C14.510 3.810 17 5 19 5a1 1 0 0 1 1 1z"/><path d="m9 12 2 2 4-4"/></svg><div class="t" style="left:74.4px;top:237.2px;font-size:27.2px;transform:scaleX(1.0205);color:#e4e8f6;">High Availability: Enabled</div>
<svg class="ic" style="left:29.6px;top:295.7px;stroke-width:1.8;color:#dfe3f2" width="30.8" height="30.8" viewBox="0 0 24 24"><rect width="20" height="8" x="2" y="2" rx="2" ry="2"/><rect width="20" height="8" x="2" y="14" rx="2" ry="2"/><line x1="6" x2="6.010" y1="6" y2="6"/><line x1="6" x2="6.010" y1="18" y2="18"/></svg><div class="t" style="left:75.4px;top:296.7px;font-size:27.2px;transform:scaleX(1.028);color:#e4e8f6;">8 Node(s)</div>
<div class="cdiv"></div>
<div class="t b" style="left:29.8px;top:411.9px;font-size:27.2px;transform:scaleX(1.0048);color:#e4e8f6;">Monthly Cost: €107.47</div>
<div class="view"></div><svg class="ic" style="left:652.7px;top:408.7px;stroke-width:2;color:#f3f5fb" width="32.4" height="32.4" viewBox="0 0 24 24"><path d="M2.062 12.348a1 1 0 0 1 0-.696 10.750 10.750 0 0 1 19.876 0 1 1 0 0 1 0 .696 10.750 10.750 0 0 1-19.876 0"/><circle cx="12" cy="12" r="3"/></svg><div class="t m" style="left:700.4px;top:409.1px;font-size:31.7px;transform:scaleX(0.9996);color:#f3f5fb;">View</div>
</div>
<div class="card" style="left:1302px;top:923px">
<div class="t" style="left:29.7px;top:39.3px;font-size:34.0px;transform:scaleX(1.095);color:#e2e6f5;">orion</div>
<div class="badge a" style="left:686.5px;top:35px;width:106.4px"></div><div class="t" style="left:707.3px;top:45.2px;font-size:22.7px;transform:scaleX(1.0709);color:#47a98b;">Active</div>
<svg style="left:30px;top:118.500px" width="38" height="25" viewBox="0 0 38 25"><rect width="38" height="12.500" fill="#a8323c"/><rect y="12.500" width="38" height="12.500" fill="#cfd0d1"/><circle cx="7.800" cy="6.800" r="3" fill="#ecd9dc"/><circle cx="9.200" cy="6.800" r="2.600" fill="#a8323c"/><circle cx="10.800" cy="6.800" r="1.400" fill="#d9a9ae"/></svg><div class="t" style="left:82.7px;top:116.8px;font-size:27.2px;transform:scaleX(0.9955);color:#e4e8f6;">SG Singapore</div>
<svg class="ic" style="left:29.4px;top:175.7px;stroke-width:1.8;color:#dfe3f2" width="30.8" height="30.8" viewBox="0 0 24 24"><path d="M12 20v2"/><path d="M12 2v2"/><path d="M17 20v2"/><path d="M17 2v2"/><path d="M2 12h2"/><path d="M2 17h2"/><path d="M2 7h2"/><path d="M20 12h2"/><path d="M20 17h2"/><path d="M20 7h2"/><path d="M7 20v2"/><path d="M7 2v2"/><rect x="4" y="4" width="16" height="16" rx="2"/><rect x="8" y="8" width="8" height="8" rx="1"/></svg><div class="t" style="left:75.9px;top:176.9px;font-size:27.2px;transform:scaleX(0.9382);color:#e4e8f6;">v1.32.1+k3s1</div>
<svg class="ic" style="left:29.6px;top:235.6px;stroke-width:1.8;color:#8c91a6" width="30.8" height="30.8" viewBox="0 0 24 24"><path d="M20 13c0 5-3.500 7.500-7.660 8.950a1 1 0 0 1-.67-.010C7.500 20.500 4 18 4 13V6a1 1 0 0 1 1-1c2 0 4.500-1.200 6.240-2.720a1.170 1.170 0 0 1 1.520 0C14.510 3.810 17 5 19 5a1 1 0 0 1 1 1z"/><path d="m9 12 2 2 4-4"/></svg><div class="t" style="left:74.3px;top:237.2px;font-size:27.2px;transform:scaleX(1.0266);color:#e4e8f6;">High Availability: Disabled</div>
<svg class="ic" style="left:29.6px;top:295.7px;stroke-width:1.8;color:#dfe3f2" width="30.8" height="30.8" viewBox="0 0 24 24"><rect width="20" height="8" x="2" y="2" rx="2" ry="2"/><rect width="20" height="8" x="2" y="14" rx="2" ry="2"/><line x1="6" x2="6.010" y1="6" y2="6"/><line x1="6" x2="6.010" y1="18" y2="18"/></svg><div class="t" style="left:75.4px;top:296.7px;font-size:27.2px;transform:scaleX(1.0254);color:#e4e8f6;">5 Node(s)</div>
<div class="cdiv"></div>
<div class="t b" style="left:29.8px;top:411.9px;font-size:27.2px;transform:scaleX(1.0452);color:#e4e8f6;">Monthly Cost: €44.40</div>
<div class="view"></div><svg class="ic" style="left:652.7px;top:408.7px;stroke-width:2;color:#f3f5fb" width="32.4" height="32.4" viewBox="0 0 24 24"><path d="M2.062 12.348a1 1 0 0 1 0-.696 10.750 10.750 0 0 1 19.876 0 1 1 0 0 1 0 .696 10.750 10.750 0 0 1-19.876 0"/><circle cx="12" cy="12" r="3"/></svg><div class="t m" style="left:700.4px;top:409.1px;font-size:31.7px;transform:scaleX(0.9996);color:#f3f5fb;">View</div>
</div>
<div class="card" style="left:2160px;top:923px">
<div class="t" style="left:29.7px;top:39.3px;font-size:34.0px;transform:scaleX(1.0765);color:#e2e6f5;">draco</div>
<div class="badge a" style="left:686.5px;top:35px;width:106.4px"></div><div class="t" style="left:707.3px;top:45.2px;font-size:22.7px;transform:scaleX(1.0709);color:#47a98b;">Active</div>
<svg style="left:30px;top:118.500px" width="38" height="25" viewBox="0 0 38 25"><rect width="38" height="25" fill="#dcdde2"/><g fill="#c9434f"><rect width="38" height="1.920"/><rect y="3.850" width="38" height="1.920"/><rect y="7.700" width="38" height="1.920"/><rect y="11.540" width="38" height="1.920"/><rect y="15.380" width="38" height="1.920"/><rect y="19.230" width="38" height="1.920"/><rect y="23.080" width="38" height="1.920"/></g><rect width="17" height="13.460" fill="#4b5b9d"/><g fill="#aab2d6"><rect x="2" y="2" width="13" height="1"/><rect x="2" y="5" width="13" height="1"/><rect x="2" y="8" width="13" height="1"/><rect x="2" y="11" width="13" height="1"/></g></svg><div class="t" style="left:81.7px;top:116.8px;font-size:27.2px;transform:scaleX(0.9954);color:#e4e8f6;">US Hillsboro, OR</div>
<svg class="ic" style="left:29.4px;top:175.7px;stroke-width:1.8;color:#dfe3f2" width="30.8" height="30.8" viewBox="0 0 24 24"><path d="M12 20v2"/><path d="M12 2v2"/><path d="M17 20v2"/><path d="M17 2v2"/><path d="M2 12h2"/><path d="M2 17h2"/><path d="M2 7h2"/><path d="M20 12h2"/><path d="M20 17h2"/><path d="M20 7h2"/><path d="M7 20v2"/><path d="M7 2v2"/><rect x="4" y="4" width="16" height="16" rx="2"/><rect x="8" y="8" width="8" height="8" rx="1"/></svg><div class="t" style="left:75.9px;top:176.9px;font-size:27.2px;transform:scaleX(0.9822);color:#e4e8f6;">v1.30.3+k3s1</div>
<svg class="ic" style="left:29.6px;top:235.6px;stroke-width:1.8;color:#4cc766" width="30.8" height="30.8" viewBox="0 0 24 24"><path d="M20 13c0 5-3.500 7.500-7.660 8.950a1 1 0 0 1-.67-.010C7.500 20.500 4 18 4 13V6a1 1 0 0 1 1-1c2 0 4.500-1.200 6.240-2.720a1.170 1.170 0 0 1 1.520 0C14.510 3.810 17 5 19 5a1 1 0 0 1 1 1z"/><path d="m9 12 2 2 4-4"/></svg><div class="t" style="left:74.4px;top:237.2px;font-size:27.2px;transform:scaleX(1.0205);color:#e4e8f6;">High Availability: Enabled</div>
<svg class="ic" style="left:29.6px;top:295.7px;stroke-width:1.8;color:#dfe3f2" width="30.8" height="30.8" viewBox="0 0 24 24"><rect width="20" height="8" x="2" y="2" rx="2" ry="2"/><rect width="20" height="8" x="2" y="14" rx="2" ry="2"/><line x1="6" x2="6.010" y1="6" y2="6"/><line x1="6" x2="6.010" y1="18" y2="18"/></svg><div class="t" style="left:75.4px;top:296.7px;font-size:27.2px;transform:scaleX(1.0254);color:#e4e8f6;">5 Node(s)</div>
<div class="cdiv"></div>
<div class="t b" style="left:29.8px;top:411.9px;font-size:27.2px;transform:scaleX(1.0038);color:#e4e8f6;">Monthly Cost: €131.50</div>
<div class="view"></div><svg class="ic" style="left:652.7px;top:408.7px;stroke-width:2;color:#f3f5fb" width="32.4" height="32.4" viewBox="0 0 24 24"><path d="M2.062 12.348a1 1 0 0 1 0-.696 10.750 10.750 0 0 1 19.876 0 1 1 0 0 1 0 .696 10.750 10.750 0 0 1-19.876 0"/><circle cx="12" cy="12" r="3"/></svg><div class="t m" style="left:700.4px;top:409.1px;font-size:31.7px;transform:scaleX(0.9996);color:#f3f5fb;">View</div>
</div>
<div class="abs" style="left:0;top:1710px;width:3016px;height:2px;background:#3d4156"></div>
<svg class="abs" style="left:0;top:1700px" width="12" height="12" viewBox="0 0 12 12"><path d="M0 1V12H11A11 11 0 0 1 0 1Z" fill="#05070c"/><path d="M0 2A10 10 0 0 0 10 12" fill="none" stroke="#5a6074" stroke-width="1.6"/></svg>
<svg class="abs" style="left:2998px;top:1694px" width="18" height="18" viewBox="0 0 18 18"><path d="M18 1V18H1A17 17 0 0 0 18 1Z" fill="#05070c"/><path d="M18 2A16 16 0 0 1 2 18" fill="none" stroke="#5a6074" stroke-width="1.6"/></svg>
</div>
<script>(function(){var w=window.innerWidth;if(w&&Math.abs(w-3016)>1){document.documentElement.style.zoom=w/3016;}})();</script>
</body>
</html>
